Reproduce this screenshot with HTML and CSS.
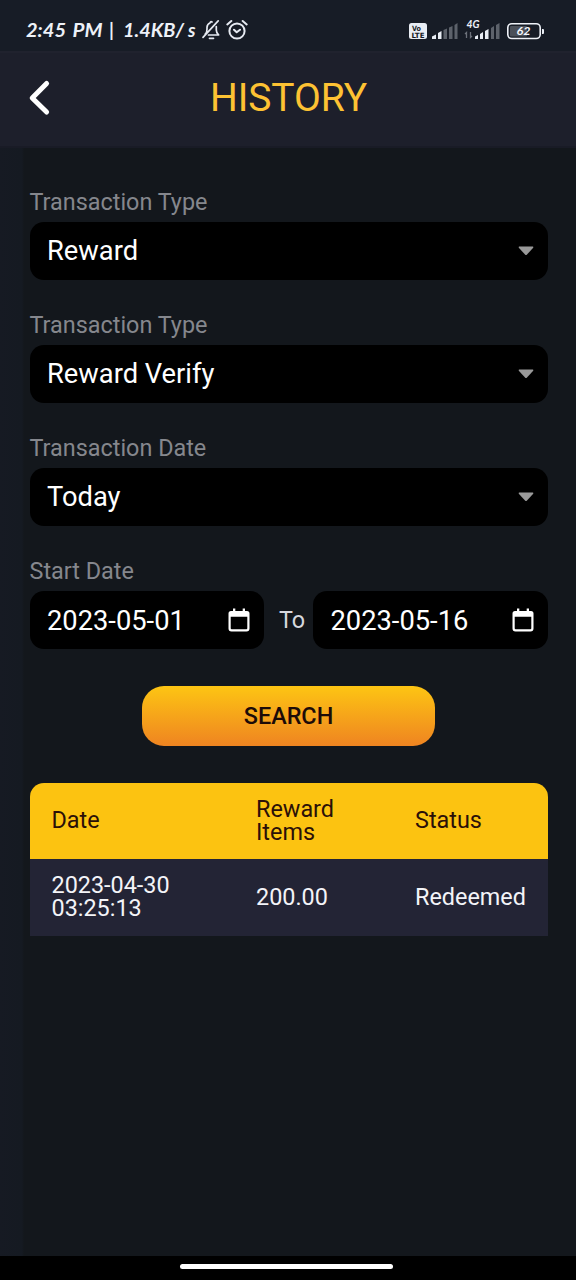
FILE: index.html
```html
<!DOCTYPE html>
<html lang="en">
<head>
<meta charset="utf-8">
<title>History</title>
<link rel="stylesheet" href="styles.css">
</head>
<body>
<div class="screen">
  <div class="status">
    <svg class="status-left" width="172" height="32" viewBox="0 0 172 32">
      <g class="hand">
        <text x="1" y="22.5" textLength="40" lengthAdjust="spacingAndGlyphs">2:45</text>
        <text x="47.5" y="22.5" textLength="30" lengthAdjust="spacingAndGlyphs">PM</text>
        <text x="84" y="22.5">|</text>
        <text x="98" y="22.5" textLength="61" lengthAdjust="spacingAndGlyphs">1.4KB/</text>
        <text x="163" y="22.5">s</text>
      </g>
    </svg>
    <svg class="bell" width="19" height="22" viewBox="0 0 19 22">
      <path d="M3.2 15.2Q5 13.8 5 10V8.4Q5.2 5 8 4Q8.5 2 10 3M14.3 7.5V11Q14.3 14 16.6 16H6.5M1 18.3 16.2 1.8M7.5 19.3H11.5"/>
    </svg>
    <svg class="alarm" width="22" height="22" viewBox="0 0 22 22">
      <circle cx="11" cy="12" r="7.6"/>
      <path d="M1.3 5.4 5.3 2M16.7 2 20.7 5.4M8 10.7 10.7 13.3 14 10.7"/>
    </svg>
    <svg class="status-right" width="137" height="24" viewBox="0 0 137 24">
      <rect class="light" x="1" y="5" width="18" height="16" rx="2.5"/>
      <g class="volte"><text x="4" y="12.5" textLength="9" lengthAdjust="spacingAndGlyphs">Vo</text><text x="3.5" y="19.5" textLength="13" lengthAdjust="spacingAndGlyphs">LTE</text></g>
      <path class="light" d="M24 18.5 28 16.5V21H24ZM30 15 33.5 13V21H30Z"/>
      <path class="dim" d="M35.5 12 39 10.5V21H35.5ZM41 9.5 44.5 8V21H41ZM46.5 7 49.5 5V21H46.5Z"/>
      <text class="net" x="58.5" y="9.5" textLength="13" lengthAdjust="spacingAndGlyphs">4G</text>
      <path class="arrows" d="M58.5 20V14.5L57 16M62.5 14V19.5L64 18"/>
      <path class="light" d="M67 18.5 70 17V21H67ZM72 16 75 14V21H72ZM77 13 80.5 11V21H77Z"/>
      <path class="dim" d="M83 10 86 8V21H83ZM88 7 91.5 5V21H88Z"/>
      <rect class="charge" x="102" y="8" width="17" height="10.5" rx="1"/>
      <rect class="case" x="99.8" y="5.7" width="32.4" height="14.8" rx="4"/>
      <path class="light" d="M134 11h1q1 0 1 1v3q0 1-1 1h-1z"/>
      <text class="level" x="108.5" y="17.2" textLength="14" lengthAdjust="spacingAndGlyphs">62</text>
    </svg>
  </div>
  <header class="header">
    <svg class="back" width="24" height="38" viewBox="0 0 24 38"><path d="M18.6 4.5 4.2 19 18.6 33"/></svg>
    <h1 class="title">HISTORY</h1>
  </header>
  <main class="main">
    <div class="group">
      <div class="label">Transaction Type</div>
      <div class="field"><span>Reward</span><svg class="arrow" width="16" height="10" viewBox="0 0 16 10"><path d="M1.2.5H14.8Q16 .8 15 2L9 8.6Q8 9.6 7 8.6L1 2Q0 .8 1.2.5Z"/></svg></div>
    </div>
    <div class="group">
      <div class="label">Transaction Type</div>
      <div class="field"><span>Reward Verify</span><svg class="arrow" width="16" height="10" viewBox="0 0 16 10"><path d="M1.2.5H14.8Q16 .8 15 2L9 8.6Q8 9.6 7 8.6L1 2Q0 .8 1.2.5Z"/></svg></div>
    </div>
    <div class="group">
      <div class="label">Transaction Date</div>
      <div class="field"><span>Today</span><svg class="arrow" width="16" height="10" viewBox="0 0 16 10"><path d="M1.2.5H14.8Q16 .8 15 2L9 8.6Q8 9.6 7 8.6L1 2Q0 .8 1.2.5Z"/></svg></div>
    </div>
    <div class="group">
      <div class="label">Start Date</div>
      <div class="range">
        <div class="field date"><span>2023-05-01</span><svg class="cal" width="22" height="24" viewBox="0 0 22 24"><path d="M3 3H5V.5H7.3V3H14.7V.5H17V3H19Q21.5 3 21.5 5.5V20.5Q21.5 23.5 18.5 23.5H3.5Q.5 23.5 .5 20.5V5.5Q.5 3 3 3ZM2.7 8.7V20.3Q2.7 21.3 3.7 21.3H18.3Q19.3 21.3 19.3 20.3V8.7Z" fill-rule="evenodd"/></svg></div>
        <div class="to">To</div>
        <div class="field date"><span>2023-05-16</span><svg class="cal" width="22" height="24" viewBox="0 0 22 24"><path d="M3 3H5V.5H7.3V3H14.7V.5H17V3H19Q21.5 3 21.5 5.5V20.5Q21.5 23.5 18.5 23.5H3.5Q.5 23.5 .5 20.5V5.5Q.5 3 3 3ZM2.7 8.7V20.3Q2.7 21.3 3.7 21.3H18.3Q19.3 21.3 19.3 20.3V8.7Z" fill-rule="evenodd"/></svg></div>
      </div>
    </div>
    <button class="search">SEARCH</button>
    <div class="table">
      <div class="row head"><div>Date</div><div>Reward<br>Items</div><div>Status</div></div>
      <div class="row"><div>2023-04-30<br>03:25:13</div><div>200.00</div><div>Redeemed</div></div>
    </div>
  </main>
  <footer class="nav"><div class="pill"></div></footer>
</div>
</body>
</html>
```
FILE: styles.css
```css
* { box-sizing: border-box; }
body { margin: 0; background: #13171c; font-family: Roboto, "Liberation Sans", sans-serif; }
.screen { display: flex; flex-direction: column; width: 576px; height: 1280px; background: linear-gradient(90deg, #161a23 0, #151a22 22px, #13171c 24px); }
.status { display: flex; height: 51px; padding: 14px 0 0 25px; background: #171c26; }
.hand { font: italic 700 18.5px Lato, sans-serif; fill: #edf1f8; }
.status-left { flex: none; }
.bell, .alarm { flex: none; margin: 5px 0 0 5px; fill: none; stroke: #e6eaf2; stroke-width: 1.7; stroke-linecap: round; stroke-linejoin: round; }
.alarm { stroke-width: 2; }
.status-right { margin: 4px 0 0 160px; flex: none; }
.light { fill: #e9edf4; }
.dim { fill: #5d626b; }
.volte { font: 700 7.2px "DejaVu Sans", sans-serif; fill: #171c26; }
.net { font: italic 700 10.5px Lato, sans-serif; fill: #edf1f8; }
.arrows { fill: none; stroke: #6c717a; stroke-width: 1.3; }
.charge { fill: #4b5059; }
.case { fill: none; stroke: #eef1f7; stroke-width: 1.6; }
.level { font: italic 700 11.5px Lato, sans-serif; fill: #f4f6fa; }
.header { display: grid; grid-template-columns: 48px 1fr 48px; align-items: center; height: 97px; padding: 0 4px 4px 5px; background: #1d1f2b; border-top: 2px solid #20222e; border-bottom: 2px solid #191b26; }
.back { margin-left: 22.5px; fill: none; stroke: #fff; stroke-width: 5; stroke-linecap: round; stroke-linejoin: round; }
.title { margin: 0; text-align: center; font-size: 39px; line-height: 46px; font-weight: 400; color: #fdc233; letter-spacing: -.1px; }
.main { flex: 1; display: flex; flex-direction: column; padding: 43px 28.5px 0 29.5px; }
.group { display: flex; flex-direction: column; gap: 8px; margin-bottom: 34px; }
.label { height: 23px; line-height: 23px; font-size: 23.4px; color: #85878d; }
.field { display: flex; align-items: center; justify-content: space-between; height: 58px; padding: 0 14px 0 17.5px; border-radius: 14px; background: #000; color: #fff; font-size: 27.3px; }
.arrow { fill: #999; margin-bottom: 1px; }
.range { display: grid; grid-template-columns: 234.5px 1fr 234.5px; align-items: center; }
.date span { padding-top: 2px; }
.cal { fill: #fff; }
.to { padding-left: 7px; text-align: center; font-size: 23.4px; color: #d6d8de; }
.search { align-self: center; width: 293.5px; height: 60px; margin-top: 3px; padding: 0; border: 0; border-radius: 22px; background: linear-gradient(#fdc513, #ef8421); font: 500 23.4px Roboto, sans-serif; color: #1c0b08; }
.table { margin-top: 37px; border-radius: 14px 14px 0 0; overflow: hidden; }
.row { display: grid; grid-template-columns: 204.5px 159px 1fr; align-items: center; height: 76.5px; padding-left: 22px; background: #232435; color: #f3f4f8; font-size: 23.4px; line-height: 23.5px; }
.head { height: 76px; background: #fcc311; color: #2b1008; }
.nav { display: flex; justify-content: center; height: 24px; padding: 8px 0 0 0; background: #000; }
.pill { width: 213px; height: 5px; margin-right: 4px; border-radius: 3px; background: #fff; }
```
